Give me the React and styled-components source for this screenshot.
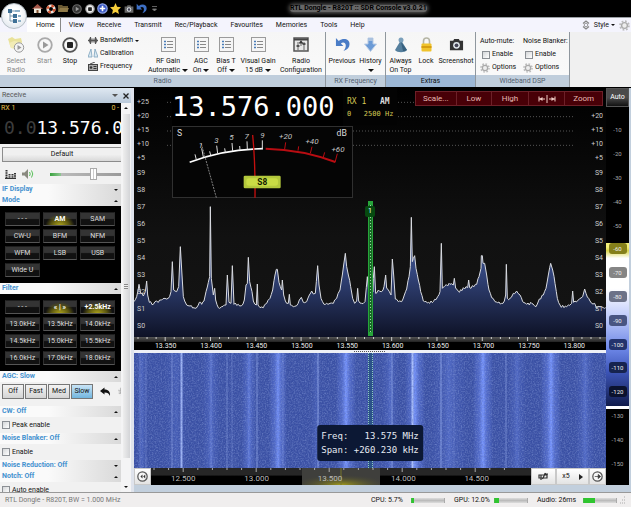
import React from "react";
import styled, { createGlobalStyle, css } from "styled-components";

const sans = `Roboto, "Liberation Sans", sans-serif`;
const mono = `"DejaVu Sans Mono", "Liberation Mono", monospace`;

const GlobalStyle = createGlobalStyle`
  * { box-sizing: border-box; }
  body { margin: 0; background: #000; font: 7px/9px ${sans}; color: #111; }
  button, input { font: inherit; color: inherit; margin: 0; padding: 0; border: 0; background: none; }
  h2 { margin: 0; font: inherit; }
  svg { display: block; flex: none; }
`;

const Window = styled.div`
  height: 100vh;
  display: flex;
  flex-direction: column;
  overflow: hidden;
`;

/* ---------- title bar and ribbon ---------- */
const TitleBar = styled.header`
  position: relative;
  display: flex;
  align-items: center;
  height: 17px;
  flex: none;
  padding-left: 32px;
  gap: 2px;
  background: #000;
`;
const QuickButton = styled.button`
  width: 11px;
  height: 12px;
  display: grid;
  place-items: center;
`;
const Title = styled.h1`
  margin: 0 auto 0 128px;
  font-size: 7px;
  line-height: 7px;
  font-weight: 700;
  color: #000;
  border-radius: 4px;
  background: #666;
  box-shadow: 0 0 4px 1px #666;
`;
const Orb = styled.button`
  position: absolute;
  left: 1px;
  top: 3px;
  width: 26px;
  height: 26px;
  border-radius: 50%;
  background: radial-gradient(circle at 50% 40%, #fff 30%, #d5dee6);
  border: 1px solid #b6bfc6;
  display: grid;
  place-items: center;
  z-index: 2;
`;
const TabBar = styled.nav`
  display: flex;
  height: 15px;
  flex: none;
  padding-left: 27px;
  border-top: 1px solid #9a9fa4;
  background: #f4f4fd;
`;
const Tab = styled.button`
  padding: 0 7px 0 6px;
  ${(p) =>
    p.$active &&
    css`
      background: #fff;
      padding: 0 5px 0 9px;
      border-right: 1px solid #888;
      margin-right: 2px;
    `}
`;
const StyleMenu = styled.div`
  margin-left: auto;
  display: flex;
  align-items: center;
  gap: 4px;
  padding-right: 1px;
`;
const Ribbon = styled.section`
  display: flex;
  flex: none;
  height: 56px;
  background: #f0f0f0;
  border-bottom: 1px solid #000;
`;
const Group = styled.section`
  display: flex;
  flex-direction: column;
  width: ${(p) => p.$w}px;
  background: linear-gradient(#f6f6f6, #fafafa);
  border-right: 1px solid #8f979e;
`;
const GroupBody = styled.div`
  display: flex;
  height: 43px;
  padding: ${(p) => p.$pad || "0 1px"};
  gap: ${(p) => p.$gap || 0}px;
`;
const GroupName = styled.h2`
  height: 12px;
  line-height: 12px;
  text-align: center;
  color: ${(p) => (p.$strong ? "#111" : "#52606e")};
  background: ${(p) => (p.$strong ? "#9db8d6" : "#c0cedc")};
`;
const BigButton = styled.button`
  width: ${(p) => p.$w}px;
  height: 43px;
  padding-top: 4px;
  flex: none;
  display: flex;
  flex-direction: column;
  align-items: center;
  white-space: nowrap;
  color: ${(p) => (p.$dim ? "#8b8b8b" : "#111")};
`;
const IconSlot = styled.span`
  height: 17px;
  margin-bottom: 4px;
  display: grid;
  place-items: center;
`;
const LabelLine = styled.span`
  height: 9px;
  display: flex;
  align-items: center;
  gap: 2px;
`;
const SmallStack = styled.div`
  display: flex;
  flex-direction: column;
  padding: 2px 0 0 ${(p) => p.$left || 0}px;
  width: ${(p) => p.$w}px;
  flex: none;
`;
const SmallButton = styled.button`
  height: 13px;
  display: flex;
  align-items: center;
  gap: 2px;
  white-space: nowrap;
`;
const StackTitle = styled.span`
  height: 14px;
  line-height: 14px;
  white-space: nowrap;
`;
const CheckLabel = styled.label`
  display: flex;
  align-items: center;
  gap: 2px;
  height: ${(p) => p.$h}px;
  padding-left: ${(p) => p.$left || 0}px;
`;
const CheckBox = styled.input`
  appearance: none;
  width: 8px;
  height: 8px;
  border: 1px solid #8b8f94;
  background: linear-gradient(135deg, #d4d6d8, #fff);
`;
const Arrow = styled.i`
  border: ${(p) => p.$s || 3}px solid transparent;
  border-top: ${(p) => p.$s || 3}px solid currentColor;
  border-bottom: 0;
  ${(p) => p.$up && css`transform: rotate(180deg);`}
`;

/* ---------- receive pane ---------- */
const Main = styled.main`
  flex: 1;
  min-height: 0;
  display: flex;
`;
const Pane = styled.aside`
  width: 134px;
  flex: none;
  display: flex;
  flex-direction: column;
  background: #eceff4;
  border-right: 3px solid #dfe3ec;
`;
const PaneHeader = styled.div`
  height: 15px;
  flex: none;
  display: flex;
  align-items: center;
  padding: 0 2px;
  gap: 5px;
  color: #555;
  background: linear-gradient(#dfe8f1, #b9c9da);
`;
const PaneTitle = styled.h2`
  flex: 1;
`;
const PaneBody = styled.div`
  flex: 1;
  min-height: 0;
  display: flex;
`;
const PaneContent = styled.div`
  flex: 1;
  min-width: 0;
  overflow: hidden;
  background: #f1f1f1;
`;
const ScrollTrack = styled.div`
  width: 10px;
  flex: none;
  display: flex;
  flex-direction: column;
  align-items: center;
  background: #f4f4f5;
  padding: 4px 0;
`;
const ScrollThumb = styled.div`
  width: 7px;
  flex: 1;
  margin: 5px 0 28px;
  display: grid;
  place-items: center;
  background: linear-gradient(90deg, #eee, #d3d4d7);
`;
const Grip = styled.span`
  width: 4px;
  height: 5px;
  background: repeating-linear-gradient(#888 0 1px, #eee 1px 2px);
`;
const Readout = styled.div`
  height: 41px;
  background: #000;
  overflow: hidden;
  white-space: nowrap;
`;
const ReadoutTop = styled.div`
  display: flex;
  justify-content: space-between;
  padding: 1px 2px 0 1px;
  color: #e9c04e;
  height: 12px;
`;
const ReadoutFreq = styled.div`
  padding-left: 4px;
  font: 18px/26px ${mono};
  color: #fff;
`;
const Faint = styled.span`
  color: #3d3d3d;
`;
const ProfileButton = styled.button`
  display: block;
  width: calc(100% - 2px);
  height: 15px;
  margin: 3px 0 2px 2px;
  padding-right: 0;
  border: 1px solid #8c8c8c;
  border-right: 0;
  background: linear-gradient(#f0f0f0 50%, #d9d9d9);
`;
const VolumeRow = styled.div`
  height: 20px;
  display: flex;
  align-items: center;
  padding-left: 5px;
`;
const IconButton = styled.button`
  width: ${(p) => p.$w}px;
  flex: none;
`;
const Slider = styled.input`
  appearance: none;
  flex: 1;
  min-width: 0;
  height: 14px;
  &::-webkit-slider-runnable-track {
    height: 3px;
    background: linear-gradient(90deg, #3aa33f, #8fc592 15%, #bbb 15%, #9a9a9a);
  }
  &::-webkit-slider-thumb {
    appearance: none;
    width: 7px;
    height: 12px;
    margin-top: -5px;
    border: 1px solid #aaa;
    background: linear-gradient(90deg, #fff 40%, #ccc 50%, #fff 60%);
  }
`;
const SectionButton = styled.button`
  width: 100%;
  height: 11px;
  padding: 0 3px 0 2px;
  display: flex;
  align-items: center;
  justify-content: space-between;
  font-weight: 700;
  color: #4491cf;
  background: linear-gradient(90deg, #fafafa 40%, #d9d9d9);
`;
const SectionArrow = styled(Arrow)`
  color: #111;
`;
const KeyGrid = styled.div`
  display: grid;
  grid-template-columns: repeat(3, 1fr);
  gap: 3px;
  padding: 6px;
  padding-left: 5px;
  background: #000;
`;
const Key = styled.button`
  height: 14px;
  line-height: 12px;
  color: #ddd;
  border: 1px solid #2e2e2e;
  border-top-color: #1d1d1d;
  border-bottom-color: #555;
  background: linear-gradient(#343434 0 45%, #111 55%);
  white-space: nowrap;
  ${(p) =>
    p.$on &&
    css`
      font-weight: 700;
      color: #fff;
      background: radial-gradient(ellipse at 50% 110%, #b5ab1c 0, #5c5710 40%, transparent 65%),
        linear-gradient(#343434 0 45%, #111 55%);
    `}
`;
const AgcRow = styled.div`
  height: 24px;
  display: flex;
  align-items: flex-start;
  gap: 1px;
  padding: 2px 0 0 2px;
  overflow: hidden;
`;
const AgcButton = styled.button`
  width: 22px;
  height: 15px;
  flex: none;
  border: 1px solid #777;
  background: ${(p) => (p.$on ? "linear-gradient(#c8e4f6, #72b5de)" : "linear-gradient(#f3f3f3, #d4d4d4)")};
`;
const AgcIcon = styled.button`
  margin: 3px 0 0 6px;
  flex: none;
`;

/* ---------- spectrum ---------- */
const Right = styled.div`
  flex: 1;
  min-width: 0;
  display: flex;
  flex-direction: column;
  background: #c2cfdd;
  padding: 0 2px 7px 0;
`;
const Views = styled.div`
  flex: 1;
  min-height: 0;
  display: flex;
`;
const Center = styled.div`
  flex: 1;
  min-width: 0;
  display: flex;
  flex-direction: column;
`;
const Spectrum = styled.section`
  position: relative;
  flex: 249;
  min-height: 0;
  display: flex;
  background: linear-gradient(#000, #111 60%, #141414);
`;
const Backdrop = styled.svg`
  position: absolute;
  inset: 0;
  width: 100%;
  height: 100%;
`;
const LevelScale = styled.div`
  position: relative;
  width: 38px;
  flex: none;
  display: flex;
  flex-direction: column;
  padding: 7px 3px 2px;
  text-align: ${(p) => (p.$right ? "right" : "left")};
`;
const Level = styled.span`
  flex: ${(p) => (p.$minor ? 14 : 17)};
  display: flex;
  align-items: center;
  justify-content: ${(p) => (p.$right ? "flex-end" : "flex-start")};
  color: #ccc;
  min-height: 0;
`;
const Instruments = styled.div`
  position: relative;
  flex: 1;
  min-width: 0;
`;
const TuneRow = styled.div`
  display: flex;
  align-items: flex-start;
  height: 38px;
`;
const BigFreq = styled.div`
  width: 171px;
  flex: none;
  font: 27px/38px ${mono};
  color: #fff;
  background: #000;
`;
const RxInfo = styled.div`
  display: grid;
  grid-template-columns: auto auto;
  column-gap: 10px;
  padding: 7px 4px 4px;
  font: 7px/13px ${mono};
  color: #d5ca55;
  background: #030303;
  justify-content: start;
  white-space: pre;
`;
const RxName = styled.span`
  font-size: 8px;
`;
const RxMode = styled.span`
  font-size: 8px;
  font-weight: 700;
  color: #ddd;
`;
const RxWidth = styled.span`
  grid-column: 1 / -1;
`;
const ViewTools = styled.div`
  position: absolute;
  top: 3px;
  right: 3px;
  width: 188px;
  height: 15px;
  display: grid;
  grid-template-columns: 40fr 36fr 37fr 37fr 38fr;
  border: 1px solid #6d2028;
`;
const ToolButton = styled.button`
  font-size: 8px;
  color: #e6b9b4;
  background: #480007;
  display: grid;
  place-items: center;
  & + & { border-left: 1px solid #6d2028; }
`;
const Cursor = styled.div`
  position: absolute;
  top: 113px;
  bottom: 1px;
  left: 50%;
  width: 5px;
  margin-left: -2px;
  border: 1px solid #27a53a;
  border-width: 4px 1px;
  background: repeating-linear-gradient(#9fd8a5 0 1px, transparent 1px 3px) 1px 0 / 1px 100% no-repeat, #176b25;
`;
const CursorBadge = styled.span`
  position: absolute;
  top: 1px;
  left: -4px;
  width: 10px;
  height: 11px;
  line-height: 11px;
  border-radius: 2px;
  text-align: center;
  color: #fff;
  background: #064a10;
`;
const Axis = styled.div`
  height: 13px;
  flex: none;
  background: #000;
`;
const AxisTicks = styled.svg`
  width: 100%;
  height: 5px;
  background: linear-gradient(#555, #222);
`;
const AxisLabels = styled.div`
  display: grid;
  grid-template-columns: repeat(10, 1fr);
  padding: 0 9px;
  text-align: center;
  line-height: 8px;
  color: #eee;
`;
const Divider = styled.div`
  height: 3px;
  flex: none;
  display: grid;
  place-items: center;
  background: #eef0f6;
`;
const DividerGrip = styled.span`
  width: 32px;
  height: 1px;
  background: repeating-linear-gradient(90deg, #555 0 1px, transparent 1px 2px);
`;
const Waterfall = styled.section`
  position: relative;
  flex: 115;
  min-height: 0;
  background: #3a50a4;
`;
const FallCursor = styled.div`
  position: absolute;
  top: 0;
  bottom: 0;
  left: 50%;
  width: 5px;
  margin-left: -2px;
  border: dotted #8fc9c0;
  border-width: 0 1px;
  background: #2b5288;
`;
const HoverInfo = styled.dl`
  position: absolute;
  left: 50%;
  bottom: 7px;
  transform: translateX(-50%);
  margin: 0;
  padding: 4px;
  display: grid;
  grid-template-columns: auto auto;
  font: 9px/14px ${mono};
  white-space: pre;
  color: #e6eaf2;
  background: #0c1834;
  border-radius: 3px;
`;
const Term = styled.dt``;
const Value = styled.dd`
  margin: 0;
  text-align: right;
`;
const BandBar = styled.div`
  height: 17px;
  flex: none;
  display: flex;
  background: #000;
`;
const BandButton = styled.button`
  width: ${(p) => p.$w}px;
  flex: none;
  display: flex;
  align-items: center;
  justify-content: center;
  gap: 9px;
  background: linear-gradient(#fff, #e3e3e3);
  border: 1px solid #c9c9c9;
`;
const BandRuler = styled.div`
  position: relative;
  flex: 1;
  min-width: 0;
  display: flex;
  align-items: flex-end;
  justify-content: space-between;
  padding: 0 42px 0 20px;
  font-size: 8px;
  line-height: 12px;
  color: #bbb;
  background: linear-gradient(#262626 40%, #000 50%);
`;
const BandLabel = styled.span`
  position: relative;
`;

/* ---------- level colours ---------- */
const ColourScale = styled.aside`
  width: 23px;
  flex: none;
  display: flex;
  flex-direction: column;
  background: #000;
`;
const AutoButton = styled.button`
  height: 19px;
  flex: none;
  color: #fff;
  border: 1px solid #555;
  background: linear-gradient(#4a4a4a 50%, #111);
`;
const ColourList = styled.div`
  flex: 1;
  min-height: 0;
  display: flex;
  flex-direction: column;
  padding: 11px 1px 10px;
  color: #aaa;
  font-size: 6px;
  background: linear-gradient(
    #000 36%, #f4f07a 36% 37%, #d9d44c 38%, #fff 40% 48%, #c4cffb 55%,
    #6c86e6 64%, #3d55b8 70%, #111c4d 79%, #fff 79% 80%, #000 80%
  );
`;
const ColourRow = styled.div`
  flex: 1;
  display: grid;
  place-items: center;
  min-height: 0;
`;
const Pill = styled.span`
  width: 18px;
  line-height: 11px;
  border-radius: 3px;
  text-align: center;
  color: #eee;
  background: ${(p) => p.$c};
`;

/* ---------- status ---------- */
const StatusBar = styled.footer`
  height: 15px;
  flex: none;
  display: flex;
  align-items: center;
  padding: 0 5px;
  background: #f0eeee;
  border-top: 1px solid #999;
`;
const Device = styled.span`
  flex: 1;
  color: #777;
`;
const Stat = styled.span`
  width: 83px;
  display: flex;
  align-items: center;
  justify-content: space-between;
  padding-right: 9px;
  &:last-of-type { padding-right: 3px; }
`;
const Meter = styled.progress`
  appearance: none;
  width: 34px;
  height: 5px;
  border: 0;
  border-left: 1px solid #4b4;
  border-right: 1px solid #aaa;
  &::-webkit-progress-bar { background: linear-gradient(#ddd, #bbb 50%, #ddd); }
  &::-webkit-progress-value { background: #2fc52f; }
`;

/* ---------- drawings ---------- */
const RoundIcon = ({ s = 11, kind, ring = "#777", fill = "#f7f7f7", ink = "#666" }) => (
  <svg width={s} height={s} viewBox="0 0 16 16">
    <circle cx="8" cy="8" r="6.8" fill={fill} stroke={ring} strokeWidth="1.8" />
    {kind === "play" && <path d="M6 4.5v7l5.5-3.5z" fill={ink} />}
    {kind === "stop" && <rect x="5" y="5" width="6" height="6" rx="1" fill={ink} />}
    {kind === "plus" && <path d="M8 4v8M4 8h8" stroke={ink} strokeWidth="2.4" />}
    {kind === "left" && <path d="M8 5L5 8l3 3zM12 5L9 8l3 3z" fill={ink} />}
    {kind === "right" && <path d="M4 8h5M9 5l3.500 3-3.500 3z" fill={ink} stroke={ink} />}
  </svg>
);
const UndoIcon = ({ s, c }) => (
  <svg width={s} height={s} viewBox="0 0 16 16">
    <path d="M1 1v8.500h8L6.300 6.800C8.500 5 11.500 6 11.500 9c0 2.500-1 4-2.500 6 4.500-1.500 6.500-4 6.500-7.500C15.500 2 9 .5 4 4.200z" fill={c} />
  </svg>
);
const BackIcon = () => (
  <svg width="11" height="10" viewBox="0 0 22 20">
    <path d="M9 1L0 8l9 7v-4c6 0 9 2 11 7 1-8-3-13-11-13z" fill="#111" />
  </svg>
);
const ListIcon = () => (
  <svg width="15" height="15" viewBox="0 0 15 15">
    <rect x=".5" y=".5" width="14" height="14" fill="#f5f5f5" stroke="#9b9b9b" />
    <path d="M6 4.500h6M6 7.500h6M6 10.500h6" stroke="#888" />
    <path d="M3 4.500h2M3 7.500h2M3 10.500h2" stroke="#4a7db8" strokeWidth="1.500" />
  </svg>
);
const GearIcon = ({ s = 9 }) => (
  <svg width={s} height={s} viewBox="0 0 16 16">
    <circle cx="8" cy="8" r="6.500" fill="none" stroke="#bbb" strokeWidth="2.400" strokeDasharray="2.600 2.500" />
    <circle cx="8" cy="8" r="4.200" fill="#eee" stroke="#aaa" strokeWidth="2" />
  </svg>
);
const CameraIcon = ({ w = 15, c = "#333" }) => (
  <svg width={w} height={w} viewBox="0 0 16 16">
    <path d="M1 4h3.500l1-2h5l1 2H15v10H1z" fill={c} />
    <circle cx="8" cy="8.800" r="3.600" fill="#dfe6ea" />
    <circle cx="8" cy="8.800" r="2" fill="#445" />
  </svg>
);
const SelectIcon = () => (
  <svg width="18" height="17" viewBox="0 0 18 17">
    <path d="M1 3l4-2 3 2 6-1 1 4-3 7-8-1z" fill="#e9e29a" />
    <path d="M2 7l5-2 7 1-3 7-7-1z" fill="#f2ecb6" />
    <circle cx="12" cy="11.500" r="4.700" fill="#f4f4f4" stroke="#999" />
    <path d="M10.500 9v5l4-2.500z" fill="#999" />
  </svg>
);
const ConfigIcon = () => (
  <svg width="16" height="15" viewBox="0 0 16 15">
    <rect x="1" y="1" width="14" height="13" fill="#e8e8e8" stroke="#555" strokeWidth="1.500" />
    <path d="M1 2.500h14" stroke="#444" strokeWidth="2" />
    <path d="M5 5v8M11 5v8M8 5v4" stroke="#666" />
    <path d="M3.500 9h3M9.500 7h3M6.500 6.500L8 4.500l1.500 2" stroke="#333" strokeWidth="1.500" fill="none" />
  </svg>
);
const DownIcon = () => (
  <svg width="13" height="15" viewBox="0 0 13 15">
    <path d="M4 1h5v6h3.500l-6 7.500L.5 7H4z" fill="#6c9bd6" stroke="#b8cbe4" />
    <path d="M4 1h5v3H4z" fill="#a9c1de" />
  </svg>
);
const TopIcon = () => (
  <svg width="14" height="16" viewBox="0 0 14 16">
    <path d="M7 3L1 13c2 3 10 3 12 0z" fill="#557f9d" />
    <circle cx="7" cy="3" r="2.500" fill="#7ba0bb" />
    <path d="M7 5l2 9c2 0 3-.5 4-1z" fill="#37607e" />
  </svg>
);
const LockIcon = () => (
  <svg width="11" height="15" viewBox="0 0 11 15">
    <path d="M2.500 7V4a3 3 0 016 0v3" fill="none" stroke="#b5b5a5" strokeWidth="1.600" />
    <rect x=".5" y="6.500" width="10" height="8" rx="1" fill="#f0c32c" />
    <path d="M.5 10h10" stroke="#d69e12" strokeWidth="2" />
  </svg>
);
const BandwidthIcon = () => (
  <svg width="10" height="9" viewBox="0 0 10 9">
    <path d="M0 4.500L2.500 1v7zM10 4.500L7.500 1v7z" fill="#666" />
    <path d="M0 4.500h10M2.500 1v7M4 2.500v4M6 2.500v4M7.500 1v7" stroke="#555" strokeWidth="1.200" />
  </svg>
);
const ScaleIcon = () => (
  <svg width="10" height="9" viewBox="0 0 10 9">
    <path d="M3 0L0 8h4zM7 0L6 8h4z" fill="#dbe9f2" stroke="#7ba1bb" strokeWidth=".800" />
  </svg>
);
const RadioIcon = () => (
  <svg width="10" height="9" viewBox="0 0 10 9">
    <path d="M2 2L7 0" stroke="#555" />
    <rect x=".5" y="2.500" width="9" height="6" fill="#aaa" stroke="#444" />
    <circle cx="3" cy="5.500" r="1.300" fill="#333" />
    <path d="M5.500 4.500h3M5.500 6.500h3" stroke="#333" />
  </svg>
);
const OrbIcon = () => (
  <svg width="15" height="16" viewBox="0 0 15 16">
    <path d="M3 3v10h6M3 8h6M5 3h3" fill="none" stroke="#7b99ae" />
    <path d="M1 1h4v4H1zM6 6h4v4H6zM6 11h4v4H6z" fill="#3f7196" />
    <path d="M8 3h5M11 8h3M11 13h3" stroke="#8fb1c8" strokeWidth="2" />
  </svg>
);
const HomeIcon = () => (
  <svg width="11" height="11" viewBox="0 0 11 11">
    <path d="M0 6l5.500-5L11 6z" fill="#a4584a" />
    <path d="M2 5.500h7V10H2z" fill="#eee8da" />
    <path d="M4.500 7h2v3h-2z" fill="#805030" />
  </svg>
);
const HelpIcon = () => (
  <svg width="10" height="10" viewBox="0 0 10 10">
    <circle cx="5" cy="5" r="3.300" fill="none" stroke="#e8e0da" strokeWidth="2.600" />
    <circle cx="5" cy="5" r="3.300" fill="none" stroke="#d3532e" strokeWidth="2.600" strokeDasharray="2.600 2.580" />
  </svg>
);
const FolderIcon = () => (
  <svg width="11" height="9" viewBox="0 0 11 9">
    <path d="M0 1h4l1 1h5v6H0z" fill="#6b5a33" />
    <path d="M2 4h9L9 8H0z" fill="#8f7a48" />
  </svg>
);
const StarIcon = () => (
  <svg width="11" height="11" viewBox="0 0 24 24">
    <path d="M12 0l3.500 8 8.500 1-6.300 6L19.500 24 12 19.500 4.500 24l1.800-9L0 9l8.500-1z" fill="#f8cf3b" />
  </svg>
);
const StyleIcon = () => (
  <svg width="8" height="10" viewBox="0 0 8 10">
    <path d="M1 3.500L4 1l3 2.500M1 6.500L4 9l3-2.500" fill="none" stroke="#888" strokeWidth="1.300" />
    <circle cx="4" cy="5" r="1.800" fill="none" stroke="#999" />
  </svg>
);
const EqIcon = () => (
  <svg width="11" height="9" viewBox="0 0 11 9">
    <path d="M1.500 0v8M4.500 4v4M7.500 4v4M10 3v5" stroke="#333" strokeWidth="2" strokeDasharray="1.500 .700" />
    <path d="M0 8.500h11" stroke="#333" />
  </svg>
);
const SpeakerIcon = () => (
  <svg width="12" height="10" viewBox="0 0 12 10">
    <path d="M0 3.500h2.500L6 0v10L2.500 6.500H0z" fill="#8a8a80" />
    <path d="M7.500 3q1.500 2 0 4M9.500 1.500q2.500 3.500 0 7" fill="none" stroke="#58c058" />
  </svg>
);
const SpanIcon = () => (
  <svg width="18" height="8" viewBox="0 0 18 8">
    <path d="M1 1.500v5M1 4h6M9 0v8M17 1.500v5M17 4h-6" stroke="#f2cfc8" />
    <path d="M1.500 4l3-2v4zM16.500 4l-3-2v4z" fill="#f2cfc8" />
  </svg>
);
const AntennaIcon = () => (
  <svg width="11" height="9" viewBox="0 0 11 9">
    <path d="M1 3v3h8V3zM3 3v5M4.500 7l3-6M6 2h4" fill="none" stroke="#333" strokeWidth="1.200" />
  </svg>
);
const MoreIcon = () => (
  <svg width="5" height="6" viewBox="0 0 5 6">
    <path d="M0 .5h5M.5 3h4l-2 2z" fill="#888" stroke="#777" strokeWidth=".8" />
  </svg>
);

const SMeter = () => (
  <svg width="181" height="72" viewBox="0 0 543 216" fontFamily="Roboto, sans-serif">
    <rect x="1.500" y="1.500" width="540" height="213" fill="#050505" stroke="#303030" strokeWidth="3" />
    <g transform="translate(-127 -123)">
      <path d="M180 232Q280 193 400 191" fill="none" stroke="#fff" strokeWidth="5" />
      <path d="M408 191Q520 194 617 231" fill="none" stroke="#b80d12" strokeWidth="6" />
      <path d="M200 224l-4-16M221 216l-5-26M243 211l-3-12M264 206l-3-24M287 202l-2-12M309 198l-2-24M331 195l-1-12M353 193l-1-24M398 192v-26" stroke="#ddd" strokeWidth="3" />
      <path d="M465 192l3-20M505 197l2-13M542 205l5-20M581 216l4-14M616 232l7-26" stroke="#b80d12" strokeWidth="3" />
      <path d="M215 176L260 338" stroke="#999" strokeWidth="2.500" strokeDasharray="6 3" />
      <path d="M369 150Q377 230 376 338" fill="none" stroke="#c4100f" strokeWidth="4" />
      <g fontSize="24" fontStyle="italic" fill="#c4c4c4" textAnchor="middle">
        <text x="213" y="188">1</text>
        <text x="260" y="173">3</text>
        <text x="305" y="166">5</text>
        <text x="351" y="161">7</text>
        <text x="398" y="158">9</text>
        <text x="468" y="163">+20</text>
        <text x="547" y="176">+40</text>
        <text x="625" y="200">+60</text>
      </g>
      <g fontSize="26" fill="#ddd" textAnchor="middle">
        <text x="150" y="154">S</text>
        <text x="636" y="154">dB</text>
      </g>
      <rect x="342" y="272" width="111" height="38" rx="4" fill="#b3c83c" />
      <rect x="350" y="280" width="95" height="22" rx="8" fill="#c9dc45" />
      <text x="398" y="301" fontSize="25" fontWeight="700" textAnchor="middle" fill="#121a00">S8</text>
    </g>
  </svg>
);

/* Trace vertices, in thirds of a pixel from each half's origin. */
const LOWER = [12,320,20,305,27,268,32,295,40,303,46,290,50,258,53,300,58,322,70,328,75,320,85,322,95,315,105,310,115,310,123,290,127,200,131,285,140,290,146,275,151,155,156,240,160,305,170,330,180,333,195,340,205,330,208,322,215,328,222,318,228,290,235,262,239,245,241,35,244,250,250,300,254,280,257,315,265,338,275,335,288,330,292,240,297,322,303,325,307,212,312,328,325,328,335,332,343,315,348,270,352,265,355,187,359,260,366,290,370,318,379,330,382,267,384,330,390,338,400,338,410,325,420,310,428,285,435,240,439,223,442,223,447,262,455,285,457,255,461,300,466,318,475,325,478,298,481,330,490,335,500,332,508,315,514,307,520,322,530,320,538,300,545,288,550,297,556,295,559,260,563,212,567,270,573,310,582,328,600,325,610,325,620,310,630,285,637,240,641,210,646,175,650,215,655,240,662,275,668,310,674,325,680,318,683,280,686,318,695,325,705,320,712,245,716,290,722,180,726,285,729,290];
const UPPER = [10,250,13,215,17,295,25,285,35,290,42,275,47,240,50,280,58,290,63,300,67,192,71,240,76,312,85,320,95,320,103,300,110,282,117,245,121,215,124,67,127,200,130,190,134,182,138,220,145,255,152,290,160,318,175,322,190,320,203,305,210,290,214,145,217,280,225,272,240,268,250,270,253,250,257,280,268,292,280,278,293,278,296,255,299,278,312,275,320,268,327,245,333,220,334,182,337,182,339,205,344,205,350,240,357,285,365,308,375,320,395,325,403,318,407,300,409,208,412,310,420,310,430,295,440,288,450,300,458,320,470,328,485,325,498,335,508,312,520,300,528,280,535,240,539,218,542,205,548,225,555,265,562,310,570,330,582,338,595,330,605,325,608,288,611,322,625,315,638,305,644,282,648,295,656,310,665,325,674,325,680,340,690,335,700,338,707,338];
const toPoints = (flat, x0) => {
  const out = [];
  for (let i = 0; i < flat.length; i += 2) out.push([flat[i] + x0, flat[i + 1] + 321]);
  return out;
};
const vertices = [...toPoints(LOWER, -12), ...toPoints(UPPER, 708)];
const trace = vertices
  .flatMap(([x, y], i) => {
    const next = vertices[i + 1];
    const here = [`${x},${y}`];
    if (next && next[0] - x > 6) {
      for (let t = x + 4; t < next[0] - 2; t += 4) {
        const f = (t - x) / (next[0] - x);
        here.push(`${t},${Math.round(y + (next[1] - y) * f + Math.sin(t * 7) * 4)}`);
      }
    }
    return here;
  })
  .join(" ");

const SpectrumPlot = () => (
  <Backdrop viewBox="0 0 1416 747" preserveAspectRatio="none">
    <defs>
      <linearGradient id="under" x1="0" y1="0" x2="0" y2="1">
        <stop offset="0" stopColor="#48609f" />
        <stop offset=".5" stopColor="#33457c" />
        <stop offset="1" stopColor="#0e1226" />
      </linearGradient>
    </defs>
    <path d="M99 43H1317M99 86H1317M99 129H1317M99 172H1317" stroke="#555" strokeWidth="3" strokeDasharray="3 6" />
    <polygon points={`0,747 ${trace} 1416,747`} fill="url(#under)" />
    <polyline points={trace} fill="none" stroke="#d9dbe0" strokeWidth="3" />
  </Backdrop>
);

const BROAD = [[8, 10, 0.3], [42, 22, 0.2], [77, 16, 0.4], [115, 14, 0.6], [144, 18, 0.9], [182, 10, 0.2], [212, 20, 1], [256, 16, 0.35], [281, 20, 0.95], [315, 34, 0.35], [349, 20, 1], [383, 18, 0.35], [417, 20, 1], [451, 18, 0.4]];
const NARROW = [[6, 0.3], [12, 0.3], [38, 0.5], [47, 0.9], [77, 0.2], [93, 0.4], [98, 0.3], [123, 0.6], [149, 0.3], [184, 0.7], [258, 0.6], [278, 1], [307, 0.7], [320, 0.2], [372, 0.5]];
const WaterfallPlot = () => (
  <Backdrop viewBox="0 0 472 115" preserveAspectRatio="none">
    <defs>
      <linearGradient id="glow">
        <stop offset="0" stopColor="#6c88f4" stopOpacity="0" />
        <stop offset=".3" stopColor="#5f7ae0" stopOpacity=".6" />
        <stop offset=".5" stopColor="#7896ff" />
        <stop offset=".7" stopColor="#5f7ae0" stopOpacity=".6" />
        <stop offset="1" stopColor="#6c88f4" stopOpacity="0" />
      </linearGradient>
      <filter id="noise" x="0" y="0" width="100%" height="100%">
        <feTurbulence type="fractalNoise" baseFrequency=".7" numOctaves="2" seed="4" />
        <feColorMatrix values="0 0 0 0 .4  0 0 0 0 .52  0 0 0 0 .9  1.400 0 0 0 -.6" />
      </filter>
      <filter id="grain" x="0" y="0" width="100%" height="100%">
        <feTurbulence type="fractalNoise" baseFrequency=".6" numOctaves="2" seed="9" />
        <feColorMatrix values="0 0 0 0 .1  0 0 0 0 .15  0 0 0 0 .45  1.400 0 0 0 -.6" />
      </filter>
    </defs>
    {BROAD.map(([x, w, o]) => (
      <rect key={x} x={x - w / 2} width={w} height="115" fill="url(#glow)" opacity={o} />
    ))}
    {NARROW.map(([x, o]) => (
      <rect key={x} x={x - 0.5} width={o > 0.8 ? 2 : 1} height="115" fill="#a9befc" opacity={o} />
    ))}
    <rect width="472" height="115" filter="url(#noise)" opacity=".6" />
    <rect width="472" height="115" filter="url(#grain)" opacity=".8" />
  </Backdrop>
);

const bandTicks = Array.from({ length: 25 }, (_, i) => `M${3 + i * 14.6} 0V${i % 5 === 2 ? 4 : 2}`).join("");
const axisTicks = Array.from({ length: 52 }, (_, i) => `M${4 + i * 9.06} 0V${i % 5 === 3 ? 4 : 2}`).join("");

/* ---------- data ---------- */
const MENUS = ["Home", "View", "Receive", "Transmit", "Rec/Playback", "Favourites", "Memories", "Tools", "Help"];
const QUICK = [
  ["Home", <HomeIcon />],
  ["Help", <HelpIcon />],
  ["Open", <FolderIcon />],
  ["Start", <RoundIcon s={10} kind="play" fill="#333" ring="#666" ink="#999" />],
  ["Stop", <RoundIcon s={10} kind="stop" fill="#eee" ring="#999" ink="#222" />],
  ["Add", <RoundIcon s={11} kind="plus" fill="#3756c4" ring="#8fa4e6" ink="#fff" />],
  ["Favourite", <StarIcon />],
  ["Screenshot", <CameraIcon w={10} c="#666" />],
  ["Undo", <UndoIcon s={11} c="#3d6fc4" />],
  ["More", <MoreIcon />],
];
const RADIO_BEFORE = [
  [28, "Select", "Radio", <SelectIcon />, true],
  [29, "Start", "", <RoundIcon s={16} kind="play" ring="#aaa" ink="#999" />, true],
  [22, "Stop", "", <RoundIcon s={16} kind="stop" ring="#555" ink="#222" />],
];
const RADIO_AFTER = [
  [40, "RF Gain", "Automatic", <ListIcon />, false, true],
  [26, "AGC", "On", <ListIcon />, false, true],
  [24, "Bias T", "Off", <ListIcon />, false, true],
  [40, "Visual Gain", "15 dB", <ListIcon />, false, true],
  [46, "Radio", "Configuration", <ConfigIcon />],
];
const MODES = ["- - -", "AM", "SAM", "CW-U", "BFM", "NFM", "WFM", "LSB", "USB", "Wide U"];
const FILTERS = ["- - -", "« | »", "+2.5kHz", "13.0kHz", "13.5kHz", "14.0kHz", "14.5kHz", "15.0kHz", "15.5kHz", "16.0kHz", "17.0kHz", "18.0kHz"];
const LEVELS = ["+25", "+20", "+15", "+10", "+5", "S9", "S8", "S7", "S6", "S5", "S4", "S3", "S2", "S1", "S0"];
const FREQS = ["13.350", "13.400", "13.450", "13.500", "13.550", "13.600", "13.650", "13.700", "13.750", "13.800"];
const PILLS = { 60: "#85801a", 70: "#858585", 80: "#6c7288", 90: "#485582", 100: "#23336d", 110: "#16234f", 120: "#0b122e" };

function Big({ item: [w, a, b, icon, dim, drop] }) {
  return (
    <BigButton $w={w} $dim={dim}>
      <IconSlot>{icon}</IconSlot>
      <LabelLine>{a}</LabelLine>
      <LabelLine>
        {b}
        {drop && <Arrow />}
      </LabelLine>
    </BigButton>
  );
}
function Section({ title, closed }) {
  return (
    <SectionButton>
      {title}
      <SectionArrow $s={2} $up={!closed} />
    </SectionButton>
  );
}
function Check({ h, left, children }) {
  return (
    <CheckLabel $h={h} $left={left}>
      <CheckBox type="checkbox" />
      {children}
    </CheckLabel>
  );
}
function Levels({ right }) {
  return (
    <LevelScale $right={right}>
      {LEVELS.map((l, i) => (
        <Level key={l} $minor={i < 5} $right={right}>{right && i === 0 ? "" : l}</Level>
      ))}
    </LevelScale>
  );
}

export default function App() {
  return (
    <Window>
      <GlobalStyle />
      <TitleBar>
        <Orb aria-label="Application menu"><OrbIcon /></Orb>
        {QUICK.map(([name, icon]) => (
          <QuickButton key={name} aria-label={name}>{icon}</QuickButton>
        ))}
        <Title>RTL Dongle - R820T :: SDR Console v3.0.21</Title>
      </TitleBar>
      <TabBar>
        {MENUS.map((m, i) => (
          <Tab key={m} $active={i === 0}>{m}</Tab>
        ))}
        <StyleMenu>
          <StyleIcon />
          <SmallButton>Style<Arrow $s={2} /></SmallButton>
          <GearIcon s={11} />
        </StyleMenu>
      </TabBar>
      <Ribbon>
        <Group $w={326}>
          <GroupBody $pad="0 0 0 2px">
            {RADIO_BEFORE.map((it) => <Big key={it[1]} item={it} />)}
            <SmallStack $w={67} $left={7}>
              <SmallButton><BandwidthIcon />Bandwidth<Arrow $s={2} /></SmallButton>
              <SmallButton><ScaleIcon />Calibration</SmallButton>
              <SmallButton><RadioIcon />Frequency</SmallButton>
            </SmallStack>
            {RADIO_AFTER.map((it) => <Big key={it[1]} item={it} />)}
          </GroupBody>
          <GroupName>Radio</GroupName>
        </Group>
        <Group $w={60}>
          <GroupBody>
            <Big item={[30, "Previous", "", <UndoIcon s={15} c="#4a7cc6" />]} />
            <Big item={[27, "History", "", <DownIcon />, false, true]} />
          </GroupBody>
          <GroupName>RX Frequency</GroupName>
        </Group>
        <Group $w={90}>
          <GroupBody>
            <Big item={[27, "Always", "On Top", <TopIcon />]} />
            <Big item={[24, "Lock", "", <LockIcon />]} />
            <Big item={[36, "Screenshot", "", <CameraIcon />]} />
          </GroupBody>
          <GroupName $strong>Extras</GroupName>
        </Group>
        <Group $w={94}>
          <GroupBody $pad="0 0 0 4px">
            <SmallStack $w={43}>
              <StackTitle>Auto-mute:</StackTitle>
              <Check h={13} left={2}>Enable</Check>
              <SmallButton><GearIcon s={10} />Options</SmallButton>
            </SmallStack>
            <SmallStack $w={45}>
              <StackTitle>Noise Blanker:</StackTitle>
              <Check h={13} left={2}>Enable</Check>
              <SmallButton><GearIcon s={10} />Options</SmallButton>
            </SmallStack>
          </GroupBody>
          <GroupName>Wideband DSP</GroupName>
        </Group>
      </Ribbon>

      <Main>
        <Pane>
          <PaneHeader>
            <PaneTitle>Receive</PaneTitle>
            <Arrow />
            <button aria-label="Close">
              <svg width="6" height="6" viewBox="0 0 6 6"><path d="M.5.5l5 5M5.500.5l-5 5" stroke="#222" strokeWidth="1.300" /></svg>
            </button>
          </PaneHeader>
          <PaneBody>
            <PaneContent>
              <Readout>
                <ReadoutTop><span>RX 1</span><span>0 -</span></ReadoutTop>
                <ReadoutFreq><Faint>0.0</Faint>13.576.0</ReadoutFreq>
              </Readout>
              <ProfileButton>Default</ProfileButton>
              <VolumeRow>
                <IconButton $w={17} aria-label="Equaliser"><EqIcon /></IconButton>
                <IconButton $w={28} aria-label="Mute"><SpeakerIcon /></IconButton>
                <Slider type="range" aria-label="Volume" defaultValue="62" />
              </VolumeRow>
              <Section title="IF Display" closed />
              <Section title="Mode" />
              <KeyGrid>
                {MODES.map((m) => <Key key={m} $on={m === "AM"}>{m}</Key>)}
              </KeyGrid>
              <Section title="Filter" />
              <KeyGrid>
                {FILTERS.map((f, i) => <Key key={f} $on={i === 1 || i === 2}>{f}</Key>)}
              </KeyGrid>
              <Section title="AGC: Slow" />
              <AgcRow>
                {["Off", "Fast", "Med", "Slow"].map((a) => (
                  <AgcButton key={a} $on={a === "Slow"}>{a}</AgcButton>
                ))}
                <AgcIcon aria-label="Reset"><BackIcon /></AgcIcon>
                <AgcIcon aria-label="Settings"><GearIcon s={9} /></AgcIcon>
              </AgcRow>
              <Section title="CW: Off" />
              <Check h={16} left={2}>Peak enable</Check>
              <Section title="Noise Blanker: Off" />
              <Check h={16} left={2}>Enable</Check>
              <Section title="Noise Reduction: Off" closed />
              <Section title="Notch: Off" />
              <Check h={16} left={2}>Auto enable</Check>
            </PaneContent>
            <ScrollTrack>
              <Arrow $s={2} $up />
              <ScrollThumb><Grip /></ScrollThumb>
              <Arrow $s={2} />
            </ScrollTrack>
          </PaneBody>
        </Pane>

        <Right>
          <Views>
            <Center>
              <Spectrum>
                <SpectrumPlot />
                <Levels />
                <Instruments>
                  <TuneRow>
                    <BigFreq>13.576.000</BigFreq>
                    <RxInfo>
                      <RxName>RX 1</RxName>
                      <RxMode>AM</RxMode>
                      <RxWidth>{"0   2500 Hz"}</RxWidth>
                    </RxInfo>
                  </TuneRow>
                  <SMeter />
                </Instruments>
                <Levels right />
                <ViewTools>
                  <ToolButton>Scale...</ToolButton>
                  <ToolButton>Low</ToolButton>
                  <ToolButton>High</ToolButton>
                  <ToolButton aria-label="Centre span"><SpanIcon /></ToolButton>
                  <ToolButton>Zoom</ToolButton>
                </ViewTools>
                <Cursor><CursorBadge>1</CursorBadge></Cursor>
              </Spectrum>
              <Axis>
                <AxisTicks viewBox="0 0 472 5" preserveAspectRatio="none">
                  <path d={axisTicks} stroke="#ccc" />
                </AxisTicks>
                <AxisLabels>{FREQS.map((f) => <span key={f}>{f}</span>)}</AxisLabels>
              </Axis>
              <Divider><DividerGrip /></Divider>
              <Waterfall>
                <WaterfallPlot />
                <FallCursor />
                <HoverInfo>
                  <Term>Freq:</Term><Value>13.575 MHz</Value>
                  <Term>Span:</Term><Value>{" +260.230 kHz"}</Value>
                </HoverInfo>
              </Waterfall>
              <BandBar>
                <BandButton $w={17} aria-label="Band down"><RoundIcon s={11} kind="left" ring="#555" ink="#333" /></BandButton>
                <BandRuler>
                  <Backdrop viewBox="0 0 380 17" preserveAspectRatio="none">
                    <defs>
                      <radialGradient id="warm" cx=".5" cy="1" r=".6">
                        <stop offset="0" stopColor="#a09a1c" />
                        <stop offset="1" stopColor="#4a4a30" stopOpacity="0" />
                      </radialGradient>
                    </defs>
                    <rect x="151" width="78" height="17" fill="#3f3f3c" />
                    <rect x="151" width="78" height="17" fill="url(#warm)" />
                    <path d="M190 0V17" stroke="#77752b" />
                    <path d={bandTicks} stroke="#aaa" />
                  </Backdrop>
                  {["12.500", "13.000", "13.500", "14.000", "14.500"].map((b) => <BandLabel key={b}>{b}</BandLabel>)}
                </BandRuler>
                <BandButton $w={25} aria-label="Antenna"><AntennaIcon /></BandButton>
                <BandButton $w={33}>
                  x5
                  <svg width="4" height="6" viewBox="0 0 4 6"><path d="M0 0v6l4-3z" fill="#222" /></svg>
                </BandButton>
                <BandButton $w={17} aria-label="Band up"><RoundIcon s={11} kind="right" ring="#555" ink="#333" /></BandButton>
              </BandBar>
            </Center>
            <ColourScale>
              <AutoButton>Auto</AutoButton>
              <ColourList>
                {Array.from({ length: 15 }, (_, i) => (i + 1) * 10).map((v) => (
                  <ColourRow key={v}>
                    {PILLS[v] ? <Pill $c={PILLS[v]}>-{v}</Pill> : <span>-{v}</span>}
                  </ColourRow>
                ))}
              </ColourList>
            </ColourScale>
          </Views>
        </Right>
      </Main>

      <StatusBar>
        <Device>RTL Dongle - R820T, BW = 1.000 MHz</Device>
        <Stat>CPU: 5.7%<Meter aria-label="CPU" max="100" value="6" /></Stat>
        <Stat>GPU: 12.0%<Meter aria-label="GPU" max="100" value="12" /></Stat>
        <Stat>Audio: 26ms<Meter aria-label="Audio" max="100" value="33" /></Stat>
        <svg width="6" height="9" viewBox="0 0 6 9"><path d="M4 1h1M2 4h1M4 4h1M0 7h1M2 7h1M4 7h1" stroke="#aaa" /></svg>
      </StatusBar>
    </Window>
  );
}
